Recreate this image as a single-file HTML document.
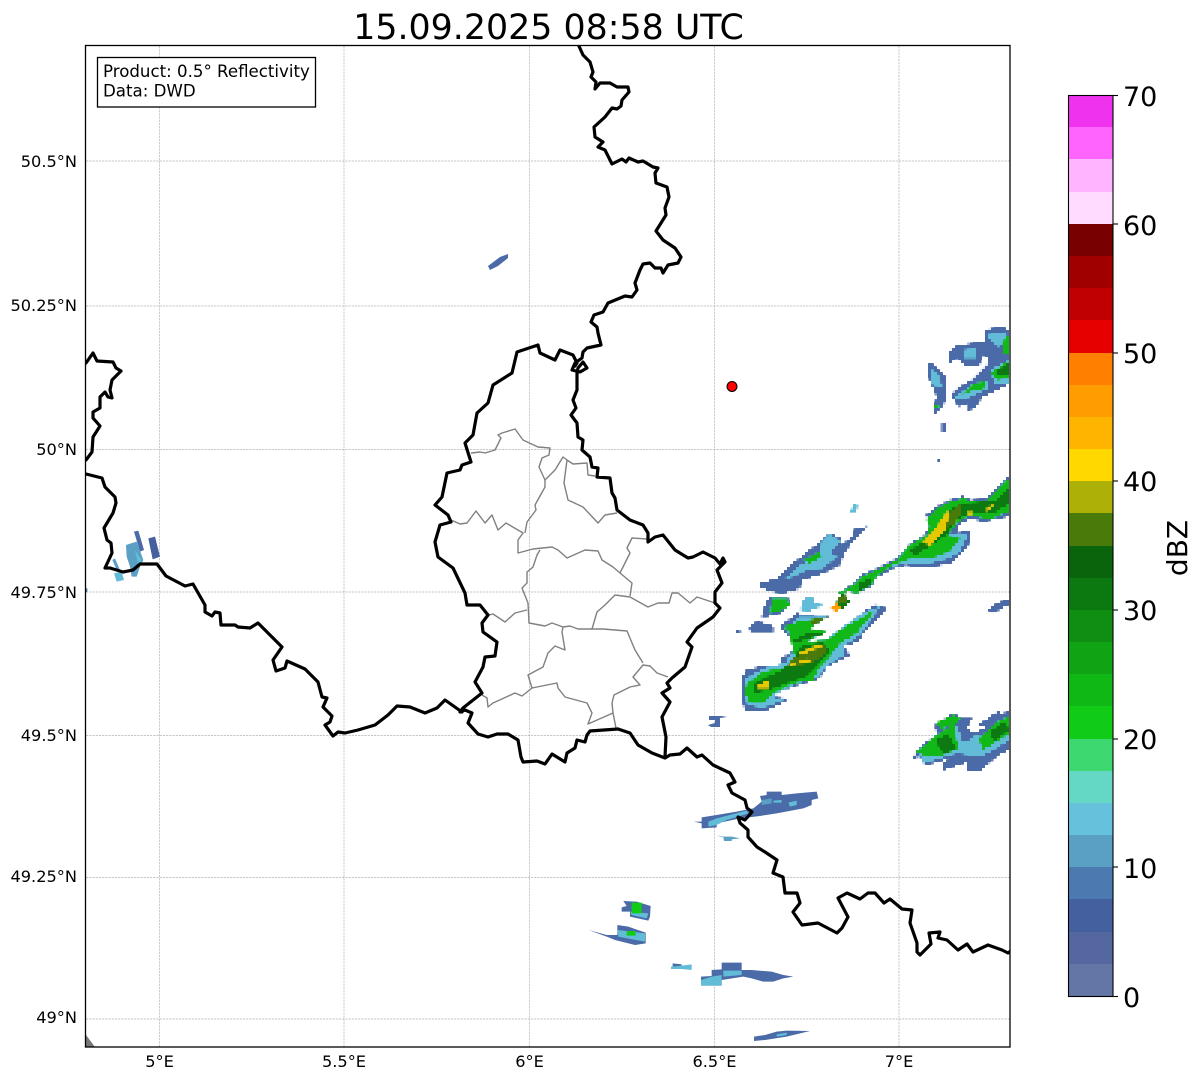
<!DOCTYPE html>
<html><head><meta charset="utf-8"><title>Radar</title>
<style>
html,body{margin:0;padding:0;background:#fff;width:1202px;height:1081px;overflow:hidden}
svg{display:block}
text{font-family:"DejaVu Sans","Liberation Sans",sans-serif;fill:#000}
.g line{stroke:#b4b4b4;stroke-width:.7;stroke-dasharray:2.2 1}
.b{fill:#4a6aa8}.l{fill:#62bcd8}.t{fill:#5a9fc4}.g1{fill:#12b818}.g2{fill:#0c7a10}.y{fill:#e6c800}.o{fill:#4a7a0a}.q{fill:#3dd870}
.xl{font-size:16.2px;text-anchor:middle}
.yl{font-size:16.2px;text-anchor:end}
.cl{font-size:27px}
</style></head><body>
<svg xmlns="http://www.w3.org/2000/svg" width="1202" height="1081" viewBox="0 0 1202 1081">
<defs><clipPath id="c"><rect x="85.5" y="45.5" width="924.5" height="1001.5"/></clipPath>
<filter id="px" filterUnits="userSpaceOnUse" x="85" y="45" width="925" height="1002" color-interpolation-filters="sRGB">
<feFlood x="86" y="46" width="1" height="1" flood-color="#000"/>
<feComposite x="85" y="45" width="3" height="3"/>
<feTile result="a"/>
<feComposite in="SourceGraphic" in2="a" operator="in"/>
<feMorphology operator="dilate" radius="1"/>
</filter></defs>
<rect width="1202" height="1081" fill="#fff"/>
<text x="548.5" y="39" style="font-size:34.8px" text-anchor="middle">15.09.2025 08:58 UTC</text>

<g class="g">
<line x1="159.5" y1="46" x2="159.5" y2="1047"/><line x1="344" y1="46" x2="344" y2="1047"/><line x1="529.5" y1="46" x2="529.5" y2="1047"/><line x1="714.5" y1="46" x2="714.5" y2="1047"/><line x1="899" y1="46" x2="899" y2="1047"/>
<line x1="86" y1="161" x2="1010" y2="161"/><line x1="86" y1="306" x2="1010" y2="306"/><line x1="86" y1="449.5" x2="1010" y2="449.5"/><line x1="86" y1="592" x2="1010" y2="592"/><line x1="86" y1="735.5" x2="1010" y2="735.5"/><line x1="86" y1="877.5" x2="1010" y2="877.5"/><line x1="86" y1="1019" x2="1010" y2="1019"/>
</g>

<g clip-path="url(#c)">
<g filter="url(#px)">
<!-- radar: main cluster -->
<g transform="translate(730 470) scale(.33333)">
<polygon class="b" points="90,340 140,325 175,290 215,260 270,215 300,190 330,205 335,225 365,200 375,175 410,170 385,195 345,245 330,285 280,310 215,330 210,355 160,370 120,365 90,350"/>
<polygon class="l" points="160,330 205,290 235,270 270,250 275,215 300,190 330,215 300,245 320,260 280,295 230,300 190,320"/>
<polygon class="g1" points="220,270 270,245 275,260 240,280"/>
<polygon class="l" points="360,125 375,100 385,110 375,125"/>
<polygon class="b" points="95,440 105,405 120,380 175,385 180,405 150,430 110,440"/>
<polygon class="g1" points="120,430 125,385 170,385 180,405 150,425"/>
<polygon class="l" points="210,420 225,380 250,385 255,400 280,405 235,425"/>
<polygon class="b" points="58,470 80,455 110,460 130,470 130,485 60,485"/>
<polygon class="b" points="18,480 30,480 32,490 20,490"/>
<polygon class="b" points="38,620 50,600 110,585 150,585 150,560 180,555 195,520 150,470 200,430 260,440 295,440 235,475 285,485 220,520 290,510 340,480 400,425 440,403 470,415 400,490 385,515 340,530 360,555 330,570 290,590 270,625 220,640 160,660 120,680 170,685 165,695 100,725 45,725 35,680"/>
<polygon class="l" points="42,630 100,595 165,580 185,550 190,520 170,480 205,440 290,440 240,475 285,487 225,518 290,508 340,470 400,428 450,410 395,490 340,530 345,555 300,580 265,620 190,645 125,680 160,690 95,715 50,700"/>
<polygon class="g1" points="50,640 100,605 170,590 195,560 185,520 180,490 160,470 205,455 290,440 240,475 285,485 230,515 290,510 345,470 400,440 440,415 380,490 330,520 300,560 270,590 250,630 190,640 130,670 100,700 60,700 45,670"/>
<polygon class="g2" points="70,640 110,620 150,605 190,570 210,530 280,515 300,545 260,590 230,620 170,640 120,660 70,670"/>
<polygon class="g2" points="190,510 230,490 285,490 240,505 190,520"/>
<polygon class="o" points="190,565 280,520 290,550 240,580 170,590"/>
<polygon class="o" points="240,450 295,440 260,460 240,465"/>
<polygon class="y" points="205,550 270,520 275,530 225,550"/>
<polygon class="y" points="165,590 235,565 240,575 185,585"/>
<polygon class="y" points="85,645 100,640 100,630 115,630 115,655 85,655"/>
<!-- elongated band -->
<polygon class="b" points="325,370 370,340 395,315 440,295 500,265 540,220 585,195 600,165 588,135 620,110 660,90 700,78 720,90 770,85 800,55 830,25 840,20 840,138 810,145 760,155 720,145 685,165 680,190 720,180 722,215 690,255 660,280 600,292 560,292 530,285 490,295 440,322 425,348 380,372 360,365"/>
<polygon class="l" points="360,360 395,325 500,275 545,230 600,185 660,190 715,190 690,245 655,265 590,282 540,280 490,288 430,320 420,345 380,365"/>
<polygon class="g1" points="325,370 370,345 395,320 440,300 500,270 540,225 590,195 600,165 590,150 620,115 660,95 700,85 720,92 770,90 800,60 830,28 840,25 840,125 810,135 790,145 760,145 720,135 680,160 655,195 690,205 660,245 620,260 590,265 545,265 490,285 440,318 425,345 380,370 360,365"/>
<polygon class="g2" points="540,240 580,215 640,180 660,120 690,100 770,95 800,90 840,50 840,100 790,130 720,130 680,150 650,195 590,235 550,260"/>
<polygon class="o" points="655,130 690,105 695,130 670,165 650,170"/>
<polygon class="y" points="580,215 610,185 650,125 660,125 645,180 600,230"/>
<polygon class="y" points="710,125 730,125 720,140"/>
<polygon class="y" points="770,110 790,105 770,125"/>
<polygon class="g2" points="385,340 420,325 425,345 385,365"/>
<polygon class="g2" points="320,395 340,370 360,395 340,415 325,420"/>
<polygon class="o" points="325,385 345,375 352,392 330,405"/>
<polygon fill="#ff9c00" points="300,415 320,400 335,410 320,425"/>
<polygon class="b" points="775,420 800,400 840,385 840,400 790,430"/>
</g>
<!-- NE -->
<g transform="translate(900 320) scale(.33333)">
<polygon class="b" points="145,95 175,75 215,70 255,65 255,30 300,20 330,30 330,190 290,210 250,230 225,260 205,275 205,250 175,260 155,225 165,210 215,180 235,160 265,130 265,110 245,105 240,135 200,140 170,115 150,130"/>
<polygon class="b" points="85,130 95,130 135,170 140,240 125,260 100,285 100,265 110,230 85,170"/>
<polygon class="b" points="125,310 135,310 138,335 125,335"/><polygon class="b" points="115,418 122,418 122,428 115,428"/>
<polygon class="l" points="190,90 225,85 225,115 195,115"/><polygon class="l" points="260,45 320,35 325,75 290,80"/><polygon class="l" points="270,150 330,120 330,190 285,190"/><polygon class="l" points="160,235 215,195 260,185 265,205 200,235"/><polygon class="l" points="95,150 120,165 125,200 95,195"/>
<polygon class="g1" points="305,70 325,45 330,100 310,105"/><polygon class="g1" points="270,160 330,120 330,175 290,180"/><polygon class="g1" points="185,225 220,190 255,185 255,205 210,215"/><polygon class="g1" points="102,258 118,255 112,270"/>
<polygon class="g2" points="285,155 330,125 330,160 300,170"/>
</g>
<!-- E -->
<g transform="translate(900 690) scale(.33333)">
<polygon class="b" points="38,205 60,170 110,135 105,105 160,70 185,85 215,85 200,115 225,130 260,110 235,105 300,60 300,75 330,60 330,180 300,190 240,245 200,240 205,215 130,240 125,225 150,205 80,225 60,200"/>
<polygon class="l" points="60,195 100,145 170,105 190,160 230,135 240,140 330,85 330,150 245,200 170,190 120,205 70,220"/>
<polygon class="g1" points="50,185 110,135 165,100 170,150 175,175 120,200 70,195"/>
<polygon class="g1" points="105,100 160,75 180,85 165,105 125,115"/>
<polygon class="g1" points="235,145 300,90 330,80 330,130 250,180"/>
<polygon class="g2" points="105,150 145,130 170,175 130,195"/><polygon class="g2" points="270,125 310,95 330,120 280,155"/>
</g>
</g>
<!-- S -->
<g transform="translate(580 780) scale(.33333)">
<polygon class="b" points="342,125 365,125 365,112 410,105 470,95 520,85 545,65 540,48 560,45 560,35 605,35 605,45 650,40 710,35 715,55 695,60 695,75 670,85 590,100 540,108 480,115 410,130 410,142 365,145 365,130"/>
<polygon class="l" points="385,125 410,115 500,92 505,100 440,120 410,135 385,140"/>
<polygon class="l" points="580,62 605,60 605,68 580,68"/><polygon class="l" points="625,68 650,62 650,75 630,80"/><polygon class="t" points="545,60 575,55 575,70 545,75"/>
<polygon class="t" points="408,166 430,170 455,170 480,175 455,178 455,183 432,183 430,172"/>
<polygon class="b" points="130,363 170,365 212,378 210,410 205,422 150,410 150,395 125,395 125,382 140,378"/>
<polygon class="l" points="150,395 205,400 200,415 155,405"/>
<polygon fill="#10cc16" points="155,368 185,368 185,400 155,400"/>
<polygon class="b" points="25,450 80,465 112,465 112,435 145,440 197,458 197,490 165,495 105,480 80,470"/>
<polygon class="l" points="112,450 195,460 195,485 115,470"/>
<polygon fill="#10cc16" points="140,453 165,453 168,467 140,467"/>
<polygon class="b" points="278,550 305,553 305,560 278,560"/>
<polygon class="l" points="273,560 305,557 335,553 335,570 305,567 273,567"/>
<polygon class="b" points="363,590 395,588 395,570 425,568 425,548 485,548 485,570 515,570 575,575 610,585 640,590 610,595 580,605 550,605 515,595 490,590 425,600 425,617 363,617"/>
<polygon class="l" points="363,600 395,590 425,585 425,617 363,617"/>
<polygon class="l" points="430,572 485,572 485,585 430,590"/>
<polygon class="b" points="522,770 555,765 590,755 620,752 690,753 620,770 555,780 522,783"/>
<polygon class="l" points="590,763 620,758 620,765 590,770"/>
</g>
<!-- W -->
<g transform="translate(80 340) scale(.33333)">
<polygon class="b" points="162,575 175,572 192,630 180,635"/>
<polygon fill="#45609f" points="205,595 225,590 240,650 218,658"/>
<polygon class="t" points="138,615 170,605 190,660 180,680 170,710 155,710 150,680 140,650"/>
<polygon class="l" points="165,630 185,660 175,680"/>
<polygon class="t" points="97,660 105,655 120,690 112,695"/>
<polygon class="l" points="102,700 125,695 132,720 110,725"/>
<polygon class="b" points="15,745 22,745 22,755 15,760"/>
</g>
<polygon class="b" points="488,266 500,257 508,254 508,258 498,266 490,270"/>
<polygon class="b" points="709,716 722,716 727,717 720,718 720,727 711,727 708,725 715,723 715,720 709,720"/>
<polygon fill="#777" points="86,1035 95,1047 86,1047"/>

<!-- gray districts -->
<g fill="none" stroke="#808080" stroke-width="1.4" stroke-linejoin="round">
<polyline points="471,453 480,452 485,453 495,450 501,438 498,435 502,433 515,429 523,440 538,447 550,448 549,455 542,458 539,467 545,480 545,487 535,505 536,510 527,522 525,533"/>
<polyline points="545,480 555,470 563,457 567,460 564,483 568,500 583,507 598,523 605,515 617,513"/>
<polyline points="567,460 573,464 587,463 588,475 595,476"/>
<polyline points="451,520 460,524 467,523 476,511 485,523 492,515 498,530 506,523 523,533 518,540 518,553 533,549 552,547 558,550 567,558 585,550 598,551 602,560 613,567 620,573 632,583 630,596"/>
<polyline points="540,550 537,555 533,567 527,572 527,583 522,588 528,603 529,623 545,626 552,623 563,627 570,626 578,629 592,629 603,629 627,631 635,650 643,663"/>
<polyline points="620,573 630,553 627,548 632,538 647,539"/>
<polyline points="489,615 493,614 505,622 515,613 527,610"/>
<polyline points="592,629 597,612 605,605 615,595 630,597 648,607 658,603 669,603 672,593 678,593 690,603 697,597 715,603"/>
<polyline points="563,627 562,632 565,650 555,646 548,653 543,667 528,675 532,688 557,683 558,688 565,697 587,703 592,713 588,724 613,713 616,728"/>
<polyline points="613,713 612,703 614,695 630,687 640,685 633,677 643,665 650,666 657,673 668,677"/>
<polyline points="482,695 487,698 488,707 493,703 515,693 522,696 532,688"/>
</g>

<!-- black borders -->
<g fill="none" stroke="#000" stroke-width="3.2" stroke-linejoin="round" stroke-linecap="round">
<polyline points="578,44 583,55 590,62 593,72 591,77 596,82 595,89 600,83 610,83 617,87 628,87 629,92 622,100 621,106 617,109 612,108 605,117 594,127 595,137 603,142 598,147 605,150 612,164 622,159 626,162 629,158 638,162 643,161 653,167 658,168 655,173 656,183 667,187 669,197 665,208 666,215 656,231 663,240 675,248 681,257 678,263 668,265 663,273 661,268 655,268 650,263 643,264 640,270 635,283 637,290 632,297 625,296 608,303 603,312 594,315 591,322 597,327 598,333 601,345 587,348 583,352 582,358 575,363 572,370 580,372 587,368 583,362 578,368 577,373 577,390 573,400 576,408 571,415 577,423 578,437 583,440 582,450 590,457 592,467 598,468 597,477 610,478 612,493 615,498 617,510 630,520 643,525 648,533 648,542 655,537 663,535 675,550 688,558 693,557 703,552 715,558 720,564 723,558 725,562 717,570 722,583 715,592 715,603 720,608 713,617 697,628 687,642 692,647 685,667 672,678 667,683 670,688 662,693 670,702 662,717 666,737 665,757"/>
<polyline points="618,729 630,733 638,745 652,753 665,758 670,755 680,754 687,748 697,757 702,755 713,765 730,773 735,782 728,785 732,793 745,800 747,808 752,812 745,820 738,817 740,823 748,830 748,837 757,847 765,852 777,860 773,873 783,877 785,893 797,893 800,903 793,912 802,925 818,923 837,933 842,928 848,917 838,898 847,893 860,899 868,893 875,893 884,903 890,899 902,909 912,910 910,923 917,943 917,952 920,955 931,944 929,933 940,932 938,938 947,940 958,950 967,944 973,952 988,945 1002,950 1008,953 1012,950"/>
<polyline points="618,729 590,731 587,735 585,742 577,740 575,748 567,753 565,762 552,754 545,764 537,761 523,762 521,757 518,740 508,734 497,734 488,737 478,734 468,723 472,713 465,710 460,712 463,708 482,693 475,682 483,667 485,657 495,656 497,642 483,632 482,623 488,615 480,605 467,605 465,593 453,568 438,557 435,542 440,525 451,522 448,515 435,505 442,497 447,473 460,470 462,465 471,462 465,443 473,435 477,413 488,403 493,385 512,373 517,352 538,345 540,353 555,360 560,350 573,355 577,363 575,366"/>
<polyline points="84,364 86,363 93,353 97,361 113,362 116,368 121,371 112,380 110,390 112,398 108,397 105,392 100,397 100,408 93,412 93,418 100,426 93,437 92,452 86,460"/>
<polyline points="84,474 86,474 102,478 105,487 115,497 116,503 113,513 104,528 107,540 111,543 112,553 105,568 110,568 123,572 133,570 140,564 157,564 166,576 185,586 193,584 205,605 205,612 212,616 215,612 220,613 221,625 235,625 238,627 250,628 258,623 282,647 273,660 276,671 285,668 287,661 305,669 318,682 322,697 327,698 323,707 332,716 330,722 325,725 333,736 338,732 345,733 358,730 375,725 388,715 397,706 410,707 425,713 437,708 445,700 462,712"/>
</g>
<circle cx="732" cy="386.5" r="5" fill="#f00" stroke="#000" stroke-width="1"/>
</g>

<rect x="85.5" y="45.5" width="924.5" height="1001.5" fill="none" stroke="#000" stroke-width="1.3"/>

<!-- info box -->
<rect x="97.5" y="57.5" width="218" height="49.5" fill="#fff" stroke="#000" stroke-width="1.3"/>
<text x="103" y="77" style="font-size:16.64px">Product: 0.5° Reflectivity</text>
<text x="103" y="96.5" style="font-size:16.64px">Data: DWD</text>

<!-- axis labels -->
<text class="yl" x="77" y="167">50.5°N</text>
<text class="yl" x="77" y="311">50.25°N</text>
<text class="yl" x="77" y="455">50°N</text>
<text class="yl" x="77" y="598">49.75°N</text>
<text class="yl" x="77" y="741">49.5°N</text>
<text class="yl" x="77" y="882">49.25°N</text>
<text class="yl" x="77" y="1023">49°N</text>
<text class="xl" x="159.5" y="1067">5°E</text>
<text class="xl" x="344" y="1067">5.5°E</text>
<text class="xl" x="529.5" y="1067">6°E</text>
<text class="xl" x="714.5" y="1067">6.5°E</text>
<text class="xl" x="899" y="1067">7°E</text>

<!-- colorbar -->
<g shape-rendering="crispEdges">
<rect x="1068.5" y="96" width="44.5" height="32" fill="#ee32ee"/>
<rect x="1068.5" y="127" width="44.5" height="33" fill="#ff64ff"/>
<rect x="1068.5" y="159" width="44.5" height="33" fill="#ffb4ff"/>
<rect x="1068.5" y="192" width="44.5" height="33" fill="#ffdcff"/>
<rect x="1068.5" y="224" width="44.5" height="33" fill="#780000"/>
<rect x="1068.5" y="256" width="44.5" height="33" fill="#a00000"/>
<rect x="1068.5" y="288" width="44.5" height="33" fill="#c00000"/>
<rect x="1068.5" y="320" width="44.5" height="33" fill="#e60000"/>
<rect x="1068.5" y="353" width="44.5" height="33" fill="#ff8000"/>
<rect x="1068.5" y="385" width="44.5" height="33" fill="#ff9c00"/>
<rect x="1068.5" y="417" width="44.5" height="33" fill="#ffb400"/>
<rect x="1068.5" y="449" width="44.5" height="33" fill="#ffd800"/>
<rect x="1068.5" y="481" width="44.5" height="33" fill="#adb006"/>
<rect x="1068.5" y="513" width="44.5" height="33" fill="#4a7a0a"/>
<rect x="1068.5" y="546" width="44.5" height="33" fill="#0a640c"/>
<rect x="1068.5" y="578" width="44.5" height="33" fill="#0c7810"/>
<rect x="1068.5" y="610" width="44.5" height="33" fill="#0f8e12"/>
<rect x="1068.5" y="642" width="44.5" height="33" fill="#10a414"/>
<rect x="1068.5" y="674" width="44.5" height="33" fill="#10b816"/>
<rect x="1068.5" y="706" width="44.5" height="33" fill="#10cc16"/>
<rect x="1068.5" y="739" width="44.5" height="33" fill="#3dd870"/>
<rect x="1068.5" y="771" width="44.5" height="33" fill="#64d8c4"/>
<rect x="1068.5" y="803" width="44.5" height="33" fill="#66c2dc"/>
<rect x="1068.5" y="835" width="44.5" height="33" fill="#5a9fc4"/>
<rect x="1068.5" y="867" width="44.5" height="33" fill="#4c7ab0"/>
<rect x="1068.5" y="899" width="44.5" height="33" fill="#45609f"/>
<rect x="1068.5" y="932" width="44.5" height="33" fill="#54689f"/>
<rect x="1068.5" y="964" width="44.5" height="32.5" fill="#6376a6"/>
</g>
<rect x="1068.5" y="95.5" width="44.5" height="901" fill="none" stroke="#000" stroke-width="1.1"/>
<g stroke="#000" stroke-width="1.1">
<line x1="1113" y1="95.5" x2="1118" y2="95.5"/><line x1="1113" y1="224" x2="1118" y2="224"/><line x1="1113" y1="353" x2="1118" y2="353"/><line x1="1113" y1="481" x2="1118" y2="481"/><line x1="1113" y1="610" x2="1118" y2="610"/><line x1="1113" y1="739" x2="1118" y2="739"/><line x1="1113" y1="867" x2="1118" y2="867"/><line x1="1113" y1="996.5" x2="1118" y2="996.5"/>
</g>
<text class="cl" x="1123" y="106">70</text>
<text class="cl" x="1123" y="235">60</text>
<text class="cl" x="1123" y="363">50</text>
<text class="cl" x="1123" y="491">40</text>
<text class="cl" x="1123" y="620">30</text>
<text class="cl" x="1123" y="749">20</text>
<text class="cl" x="1123" y="878">10</text>
<text class="cl" x="1123" y="1007">0</text>
<text class="cl" style="font-size:28px" transform="translate(1187 548) rotate(-90)" text-anchor="middle">dBZ</text>
</svg>
</body></html>
